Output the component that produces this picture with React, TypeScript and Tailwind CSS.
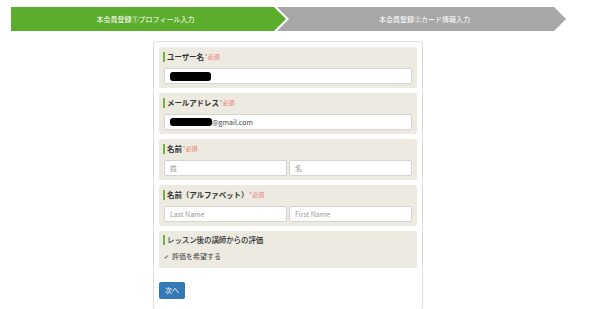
import React from "react";

const font = { fontFamily: '"Noto Sans CJK JP", "Noto Sans", sans-serif' };

function Label({ text, required = true, bold = true }: { text: string; required?: boolean; bold?: boolean }) {
  return (
    <div className="flex items-center h-[10px] border-l-2 border-[#6cb33f] pl-[2px] -ml-[1px]">
      <span className={"text-[7.5px] leading-none text-[#333] tracking-[-0.1px] " + (bold ? "font-bold" : "font-medium")}>{text}</span>
      {required && <span className="text-[6px] leading-none text-[#e8756b] ml-[1px]">*必須</span>}
    </div>
  );
}

function Field({ children, className = "" }: { children?: React.ReactNode; className?: string }) {
  return (
    <div
      className={
        "h-[16px] bg-white border border-[#d4d4d4] rounded-[2px] flex items-center px-[5px] text-[7px] leading-none " +
        className
      }
    >
      {children}
    </div>
  );
}

export default function App() {
  return (
    <div className="w-[600px] h-[309px] bg-white overflow-hidden" style={font}>
      <div className="flex pt-[7px] pl-[11px]">
        <div className="relative z-10 w-[278px] h-[24px] bg-white [clip-path:polygon(0_0,266px_0,278px_50%,266px_100%,0_100%)]">
          <div className="w-[275px] h-[24px] bg-[#5dad2d] [clip-path:polygon(0_0,263px_0,275px_50%,263px_100%,0_100%)] flex items-center justify-center pr-[6px] text-white text-[7px] leading-none">
            本会員登録①プロフィール入力
          </div>
        </div>
        <div className="-ml-[14px] w-[291px] h-[24px] bg-[#a7a7a7] [clip-path:polygon(0_0,279px_0,291px_50%,279px_100%,0_100%)] flex items-center justify-center pl-[8px] text-white text-[7px] leading-none">
          本会員登録②カード情報入力
        </div>
      </div>

      <div className="ml-[153px] mt-[10px] w-[270px] border border-[#dcdcdc] rounded-[3px] px-[5px] pt-[5px] pb-[10px]">
        <div className="flex flex-col gap-[5px]">
          <div className="bg-[#edebe1] rounded-[2px] px-[5px] pt-[5px] pb-[4px] h-[41px]">
            <Label text="ユーザー名" />
            <Field className="mt-[6px]">
              <span className="inline-block w-[41px] h-[9px] bg-black rounded-[3px]" />
            </Field>
          </div>

          <div className="bg-[#edebe1] rounded-[2px] px-[5px] pt-[5px] pb-[4px] h-[41px]">
            <Label text="メールアドレス" />
            <Field className="mt-[6px]">
              <span className="inline-block w-[42px] h-[8px] bg-black rounded-[3px]" />
              <span className="text-[#444]">@gmail.com</span>
            </Field>
          </div>

          <div className="bg-[#edebe1] rounded-[2px] px-[5px] pt-[5px] pb-[4px] h-[41px]">
            <Label text="名前" />
            <div className="mt-[6px] flex gap-[2px]">
              <Field className="flex-1 text-[#999]">姓</Field>
              <Field className="flex-1 text-[#999]">名</Field>
            </div>
          </div>

          <div className="bg-[#edebe1] rounded-[2px] px-[5px] pt-[5px] pb-[4px] h-[41px]">
            <Label text="名前（アルファベット）" />
            <div className="mt-[6px] flex gap-[2px]">
              <Field className="flex-1 text-[#999]">Last Name</Field>
              <Field className="flex-1 text-[#999]">First Name</Field>
            </div>
          </div>

          <div className="bg-[#edebe1] rounded-[2px] px-[5px] pt-[4px] h-[37px]">
            <Label text="レッスン後の講師からの評価" required={false} bold={false} />
            <div className="mt-[8px] flex items-center gap-[3px] text-[7px] leading-none text-[#444]">
              <span className="text-[6px] text-[#666]">✔</span>
              <span>評価を希望する</span>
            </div>
          </div>
        </div>

        <button className="mt-[14px] w-[26px] h-[17px] bg-[#337ab7] rounded-[2px] text-white text-[7px] leading-none flex items-center justify-center">
          次へ
        </button>
      </div>
    </div>
  );
}
